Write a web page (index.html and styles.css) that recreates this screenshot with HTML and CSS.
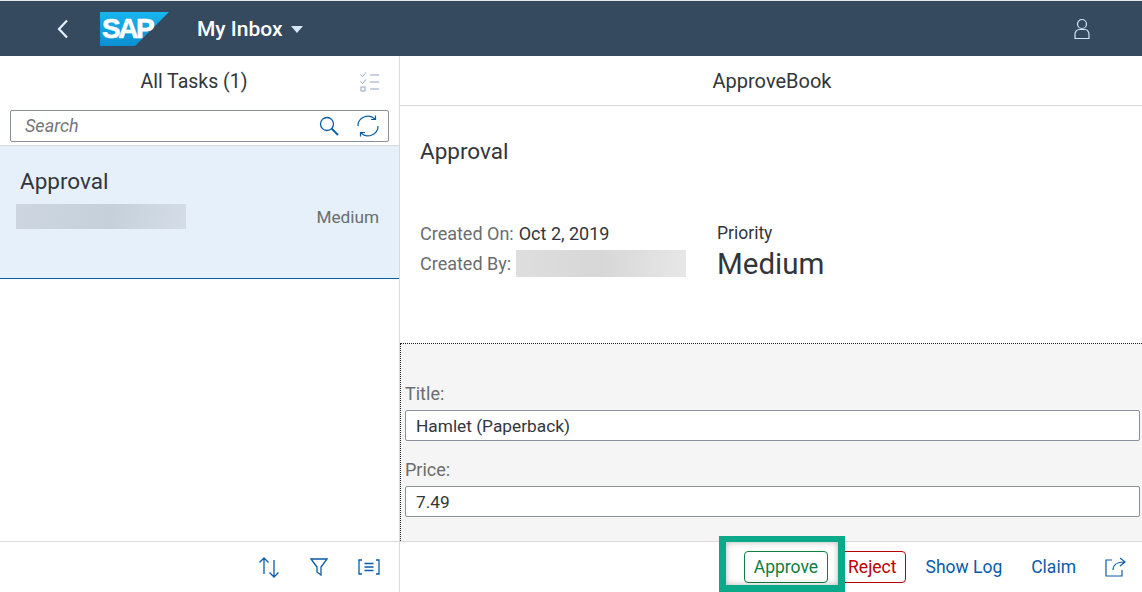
FILE: index.html
```html
<!DOCTYPE html>
<html lang="en">
<head>
    <meta charset="UTF-8">
    <meta name="viewport" content="width=device-width, initial-scale=1.0">
    <title>My Inbox</title>
    <link rel="stylesheet" href="styles.css">
</head>
<body>
    <header class="shell">
        <svg class="back-icon" width="14" height="20" viewBox="0 0 14 20"><path d="M11 1.500L3 10l8 8.500" fill="none" stroke="#e4f0fb" stroke-width="2.200"/></svg>
        <div class="logo">
            <svg class="logo-shape" width="69" height="34" viewBox="0 0 69 34">
                <defs><linearGradient id="sap-blue" x1="0" y1="0" x2="0" y2="1"><stop offset="0" stop-color="#19b5ee"/><stop offset="1" stop-color="#0a8fd2"/></linearGradient></defs>
                <polygon points="0,0 69,0 35,34 0,34" fill="url(#sap-blue)"/>
            </svg>
            <span class="logo-text">SAP</span>
        </div>
        <div class="app-title">My Inbox</div>
        <div class="caret"></div>
        <svg class="user-icon" width="16" height="22" viewBox="0 0 16 22"><circle cx="8" cy="6" r="4.500" fill="none" stroke="#cfe6fa" stroke-width="1.200"/><path d="M1 20.500v-4c0-3 2-5 4-5h6c2 0 4 2 4 5v4z" fill="none" stroke="#cfe6fa" stroke-width="1.200"/></svg>
    </header>

    <main class="split">
        <section class="master">
            <div class="master-head">
                <h2 class="head-title">All Tasks (1)</h2>
                <svg class="multi-icon" width="20" height="20" viewBox="0 0 20 20" fill="none" stroke="#8fa3c4" stroke-width="1">
                    <path d="M0.500 2.500l2 2 3.500-4M0.500 9.500l2 2 3.500-4"/>
                    <rect x="1" y="15" width="4" height="4"/>
                    <path d="M10 3h9M10 10h9M10 17h9"/>
                </svg>
            </div>
            <div class="search-row">
                <div class="search">
                    <span class="search-text">Search</span>
                    <svg width="20" height="20" viewBox="0 0 20 20" fill="none" stroke="#0a5ba8" stroke-width="1.300"><circle cx="8" cy="8" r="6.500"/><path d="M12.500 12.500L19 19" stroke-width="1.800"/></svg>
                    <svg class="refresh-icon" width="22" height="22" viewBox="0 0 22 22" fill="none" stroke="#0a5ba8" stroke-width="1.200"><path d="M1 11a10 9.500 0 0 1 17-7"/><path d="M21 11a10 9.500 0 0 1-17 7"/><path d="M18.500 0.500V4.500h-4.500M3.500 21.500V17.500h4.500"/></svg>
                </div>
            </div>
            <div class="task-item">
                <div class="task-name">Approval</div>
                <div class="task-row">
                    <div class="blur blur-blue"></div>
                    <div class="task-priority">Medium</div>
                </div>
            </div>
            <div class="master-space"></div>
        </section>

        <section class="detail">
            <div class="detail-head">ApproveBook</div>
            <div class="detail-info">
                <h1 class="detail-title">Approval</h1>
                <div class="attrs">
                    <div class="attrs-left">
                        <div class="attr"><span class="attr-label">Created On:</span> <span>Oct 2, 2019</span></div>
                        <div class="attr"><span class="attr-label">Created By:</span> <div class="blur blur-grey"></div></div>
                    </div>
                    <div class="attrs-right">
                        <div class="priority-label">Priority</div>
                        <div class="priority-value">Medium</div>
                    </div>
                </div>
            </div>
            <div class="form-area">
                <label class="field-label" for="title">Title:</label>
                <input class="field" id="title" type="text" value="Hamlet (Paperback)">
                <label class="field-label" for="price">Price:</label>
                <input class="field" id="price" type="text" value="7.49">
            </div>
        </section>
    </main>

    <footer class="footer">
        <div class="footer-left">
            <svg width="22" height="22" viewBox="0 0 22 22" fill="none" stroke="#0a5ba8" stroke-width="1.300"><path d="M6 18V2M1.500 6.500L6 2l4.500 4.500M16 4v17M11.500 16.500L16 21l4.500-4.500"/></svg>
            <svg width="18" height="18" viewBox="0 0 18 18" fill="none" stroke="#0a5ba8" stroke-width="1.300"><path d="M1 1h16l-6 8v8l-4-3V9z"/></svg>
            <svg width="22" height="16" viewBox="0 0 22 16" fill="none" stroke="#0a5ba8" stroke-width="1.300"><path d="M4 1H1v14h3M18 1h3v14h-3M6.500 4.500h9M6.500 8h9M6.500 11.500h9"/></svg>
        </div>
        <div class="footer-right">
            <button class="btn btn-approve">Approve</button>
            <button class="btn btn-reject">Reject</button>
            <button class="btn btn-plain btn-log">Show Log</button>
            <button class="btn btn-plain btn-claim">Claim</button>
            <svg class="share-icon" width="21" height="20" viewBox="0 0 21 20" fill="none" stroke="#0a5ba8" stroke-width="1.200"><path d="M7 3H1v16h16v-6"/><path d="M8 13c0-5 4-8 11-8M15 1l5 4-5 4"/></svg>
        </div>
    </footer>

    <div class="highlight"></div>
</body>
</html>
```
FILE: styles.css
```css
* {
    box-sizing: border-box;
}
html, body {
    height: 100%;
}
body {
    margin: 0;
    height: 592px;
    overflow: hidden;
    display: flex;
    flex-direction: column;
    position: relative;
    font-family: Roboto, "Liberation Sans", sans-serif;
    font-size: 18px;
    color: #32363a;
    background-color: #fff;
}
.shell {
    height: 56px;
    flex: none;
    display: flex;
    align-items: center;
    background-color: #354a5f;
    border-top: 1px solid #e5e5e5;
    padding-left: 56px;
    padding-right: 52px;
}
.back-icon {
    margin-right: 30px;
}
.logo {
    width: 69px;
    height: 34px;
    position: relative;
    margin-right: 28px;
}
.logo-shape {
    display: block;
}
.logo-text {
    position: absolute;
    left: 2px;
    top: -1px;
    color: #fff;
    font-family: "Liberation Sans", sans-serif;
    font-weight: bold;
    font-size: 28px;
    line-height: 36px;
    letter-spacing: -2.500px;
    -webkit-text-stroke: 0.6px #fff;
}
.app-title {
    color: #fff;
    font-weight: 500;
    font-size: 21px;
}
.caret {
    width: 0;
    height: 0;
    margin-left: 8px;
    margin-top: 1px;
    border-left: 6px solid transparent;
    border-right: 6px solid transparent;
    border-top: 7px solid #d5e6f7;
}
.user-icon {
    margin-left: auto;
}
.split {
    flex: 1;
    min-height: 0;
    display: flex;
}
.master {
    width: 400px;
    flex: none;
    border-right: 1px solid #d9d9d9;
    display: flex;
    flex-direction: column;
}
.master-head {
    height: 50px;
    display: flex;
    align-items: center;
    justify-content: center;
    position: relative;
}
.head-title {
    margin: 0 11px 0 0;
    font-size: 19.500px;
    font-weight: 400;
}
.multi-icon {
    position: absolute;
    right: 19px;
    top: 16px;
}
.search-row {
    padding: 4px 10px 3px;
    border-bottom: 1px solid #d9d9d9;
}
.search {
    height: 32px;
    display: flex;
    align-items: center;
    padding: 0 9px 0 14px;
    border: 1px solid #89919a;
    border-radius: 2px;
    background-color: #fff;
}
.search-text {
    flex: 1;
    font-style: italic;
    font-size: 18px;
    line-height: 28px;
    color: #74777a;
}
.refresh-icon {
    margin-left: 18px;
}
.task-item {
    height: 133px;
    padding: 20px 20px 0 16px;
    background-color: #e5f0fa;
    border-bottom: 1px solid #0a5ba8;
}
.task-name {
    font-size: 22.500px;
    line-height: 30px;
    padding-left: 4px;
}
.task-row {
    display: flex;
    justify-content: space-between;
    align-items: center;
    margin-top: 8px;
}
.task-priority {
    color: #6a6d70;
    font-size: 17.200px;
    margin-top: 1px;
}
.blur {
    width: 170px;
    height: 25px;
}
.blur-blue {
    background: linear-gradient(100deg, #cdd6e0, #c6d0db 55%, #d4dde7);
}
.blur-grey {
    height: 27px;
    align-self: flex-end;
    margin-bottom: 1px;
    background: linear-gradient(90deg, #dedede, #d6d7d6 50%, #e6e7e6);
}
.master-space {
    flex: 1;
}
.detail {
    flex: 1;
    min-width: 0;
    display: flex;
    flex-direction: column;
}
.detail-head {
    height: 50px;
    display: flex;
    align-items: center;
    justify-content: center;
    border-bottom: 1px solid #d9d9d9;
    font-size: 20px;
    padding-left: 2px;
}
.detail-info {
    height: 237px;
    padding: 30px 20px 0;
}
.detail-title {
    margin: 0;
    font-size: 22.500px;
    font-weight: 400;
    line-height: 30px;
}
.attrs {
    display: flex;
    margin-top: 52px;
}
.attrs-left {
    width: 297px;
}
.attr {
    display: flex;
    align-items: center;
    gap: 5px;
    height: 30px;
}
.attr-label {
    color: #6a6d70;
}
.priority-label {
    line-height: 30px;
    font-size: 17.500px;
}
.priority-value {
    font-size: 29.500px;
    line-height: 32px;
}
.form-area {
    flex: 1;
    padding: 35px 2px 0 4px;
    background-color: #f5f5f5;
    border-top: 1px dotted #222;
    border-left: 1px dotted #222;
}
.field-label {
    display: block;
    color: #6a6d70;
    line-height: 30px;
    height: 31px;
}
.field {
    display: block;
    width: 100%;
    height: 31px;
    margin-bottom: 14px;
    padding: 0 10px;
    border: 1px solid #89919a;
    border-radius: 2px;
    font: inherit;
    font-size: 17.300px;
    color: #32363a;
    background-color: #fff;
}
.footer {
    height: 51px;
    flex: none;
    display: flex;
    border-top: 1px solid #d9d9d9;
}
.footer-left {
    width: 400px;
    flex: none;
    display: flex;
    align-items: center;
    justify-content: flex-end;
    gap: 30px;
    padding-right: 19px;
    border-right: 1px solid #d9d9d9;
}
.footer-right {
    flex: 1;
    display: flex;
    align-items: center;
    justify-content: flex-end;
    padding-right: 16px;
}
.btn {
    height: 32px;
    padding: 0 9px;
    border: 1px solid transparent;
    border-radius: 4px;
    background-color: #fff;
    font: inherit;
    font-size: 17.500px;
}
.btn-approve {
    color: #107e3e;
    border-color: #107e3e;
    margin-right: 10px;
}
.btn-reject {
    color: #b00;
    border-color: #b00;
}
.btn-plain {
    color: #0a5ba8;
}
.btn-log {
    margin-left: 9px;
}
.btn-claim {
    margin-left: 9px;
}
.share-icon {
    margin-left: 19px;
}
.highlight {
    position: absolute;
    left: 719px;
    top: 536px;
    width: 126px;
    height: 56px;
    border-style: solid;
    border-color: #0aa98a;
    border-width: 6px 7px 7px;
    box-shadow: inset 0 0 6px rgba(0, 0, 0, 0.3);
}
```
